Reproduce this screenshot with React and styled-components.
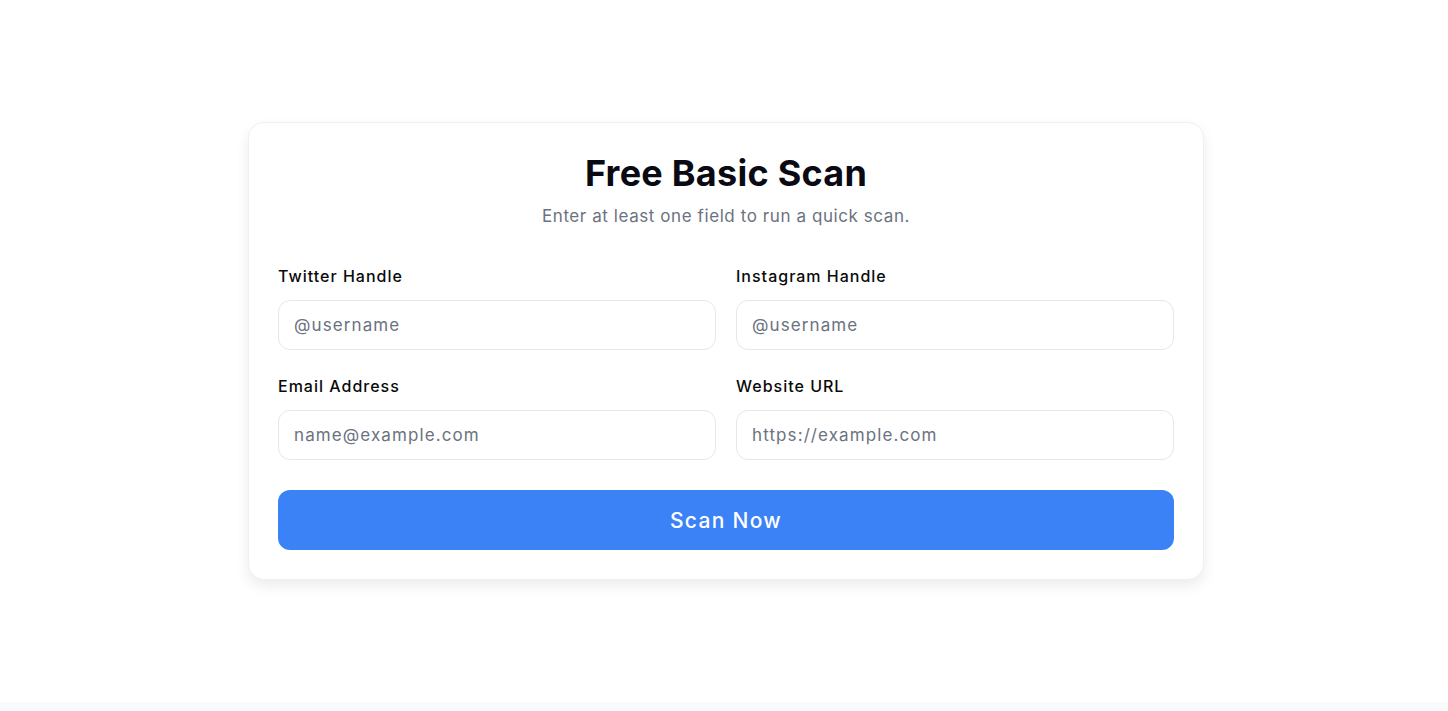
import styled, { createGlobalStyle } from 'styled-components';

const GlobalStyle = createGlobalStyle`
  * { box-sizing: border-box; }
  body {
    margin: 0;
    background: #f9fafb;
    font-family: 'Inter', 'Open Sans', sans-serif;
    color: #111827;
  }
`;

const fields = [
  { id: 'twitter', label: 'Twitter Handle', placeholder: '@username', type: 'text' },
  { id: 'instagram', label: 'Instagram Handle', placeholder: '@username', type: 'text' },
  { id: 'email', label: 'Email Address', placeholder: 'name@example.com', type: 'email' },
  { id: 'website', label: 'Website URL', placeholder: 'https://example.com', type: 'url' },
];

export default function App() {
  return (
    <>
      <GlobalStyle />
      <Section>
        <Card>
          <Title>Free Basic Scan</Title>
          <Subtitle>Enter at least one field to run a quick scan.</Subtitle>
          <Form onSubmit={(e) => e.preventDefault()}>
            <Grid>
              {fields.map((f) => (
                <Field key={f.id}>
                  <Label htmlFor={f.id}>{f.label}</Label>
                  <Input id={f.id} type={f.type} placeholder={f.placeholder} />
                </Field>
              ))}
            </Grid>
            <Button type="submit">Scan Now</Button>
          </Form>
        </Card>
      </Section>
    </>
  );
}

const Section = styled.section`
  height: 702px;
  padding-left: 4px;
  background: #ffffff;
  display: flex;
  align-items: center;
  justify-content: center;
`;

const Card = styled.div`
  width: 956px;
  background: #ffffff;
  border: 1px solid #f0f0f0;
  border-radius: 16px;
  padding: 29px;
  box-shadow: 0 6px 14px rgba(0, 0, 0, 0.08);
`;

const Title = styled.h2`
  margin: 0;
  text-align: center;
  font-size: 36px;
  line-height: 43px;
  font-weight: 700;
  color: #0a0a14;
  letter-spacing: 0.25px;
`;

const Subtitle = styled.p`
  margin: 8px 0 0;
  text-align: center;
  font-size: 17px;
  line-height: 26px;
  color: #6b7280;
  letter-spacing: 0.58px;
`;

const Form = styled.form`
  margin-top: 35px;
  display: flex;
  flex-direction: column;
  gap: 30px;
`;

const Grid = styled.div`
  display: grid;
  grid-template-columns: 1fr 1fr;
  column-gap: 20px;
  row-gap: 24px;
`;

const Field = styled.div`
  display: flex;
  flex-direction: column;
  gap: 12px;
`;

const Label = styled.label`
  font-size: 16px;
  line-height: 24px;
  font-weight: 500;
  color: #0a0a0a;
  letter-spacing: 1px;
`;

const Input = styled.input`
  height: 50px;
  padding: 0 15px;
  border: 1px solid #e5e7eb;
  border-radius: 12px;
  font-family: inherit;
  font-size: 17px;
  letter-spacing: 1.1px;
  color: #111827;
  background: #ffffff;
  outline: none;

  &::placeholder {
    color: #6b7280;
  }
`;

const Button = styled.button`
  height: 60px;
  border: none;
  border-radius: 12px;
  background: #3b82f6;
  color: #ffffff;
  font-family: inherit;
  font-size: 21px;
  font-weight: 500;
  letter-spacing: 1.3px;
  cursor: pointer;
`;
